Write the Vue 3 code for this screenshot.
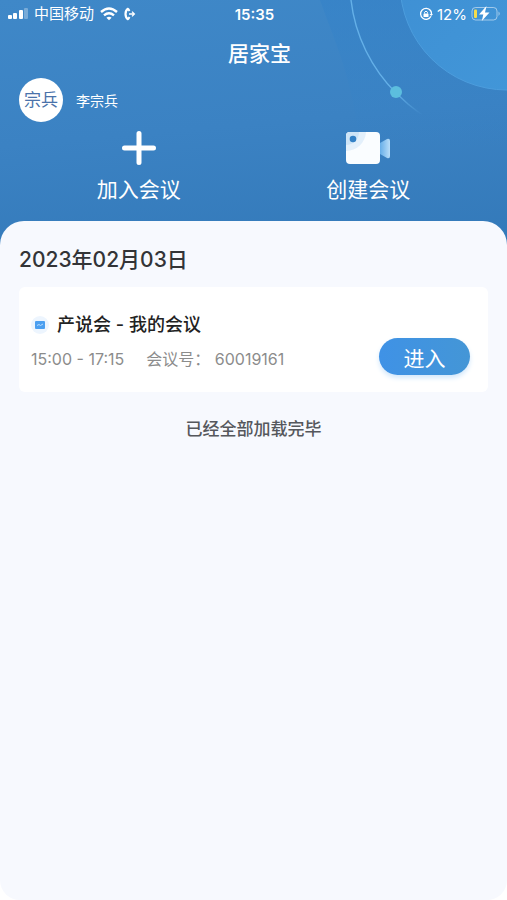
<template>
  <div class="page">
    <header class="hero">
      <svg class="decor" viewBox="0 0 187 236" aria-hidden="true">
        <defs>
          <linearGradient id="planet" x1="0" y1="0" x2="1" y2="1">
            <stop offset="0" stop-color="#3d8dd2" />
            <stop offset="1" stop-color="#4399da" />
          </linearGradient>
          <linearGradient id="orbit" x1="0" y1="0" x2="0" y2="1">
            <stop offset="0" stop-color="#64b0e8" />
            <stop offset=".8" stop-color="#64b0e8" />
            <stop offset="1" stop-color="#64b0e8" stop-opacity="0" />
          </linearGradient>
          <linearGradient id="shade" x1="0" y1="0" x2="0" y2="1">
            <stop offset="0" stop-color="#3482c8" stop-opacity=".6" />
            <stop offset="1" stop-color="#3482c8" stop-opacity="0" />
          </linearGradient>
        </defs>
        <path d="M0 0C14 40 34 80 40 150H187V0Z" fill="url(#shade)" />
        <circle cx="187" cy="-17" r="107" fill="url(#planet)" stroke="#4c9ddd" />
        <path d="M31 0C35 36 52 69 76 93Q88 105 102 115" fill="none" stroke="url(#orbit)" stroke-width="1.4" />
        <circle cx="76" cy="92" r="6" fill="#5cbede" />
      </svg>

      <div class="status">
        <div class="status-left">
          <svg width="20" height="12" viewBox="0 0 20 12" aria-hidden="true" fill="#fff">
            <rect x="0" y="7" width="4" height="4" rx="1" />
            <rect x="5" y="5" width="4" height="6" rx="1" />
            <rect x="11" y="2" width="4" height="9" rx="1" />
            <rect x="16" y="0" width="4" height="11" rx="1" opacity=".3" />
          </svg>
          <span class="carrier">中国移动</span>
          <svg width="18" height="14" viewBox="0 0 18 14" aria-hidden="true" fill="none" stroke="#fff" stroke-width="2.4">
            <path d="M1 5Q9-2 17 5M4 8.300Q9 4 14 8.300" />
            <path d="M6.400 10.700Q9 8.600 11.600 10.700L9 13.300Z" fill="#fff" stroke="none" />
          </svg>
          <svg width="12" height="14" viewBox="0 0 12 14" aria-hidden="true" fill="none" stroke="#fff">
            <path d="M4.500 1.500Q1.500 3 1.500 7T4.500 12.500" stroke-width="2.200" />
            <path d="M4 1.500L5.500 4M4 12.500L5.500 10" stroke-width="2" />
            <path d="M5 7H10M8 4.600L10.400 7L8 9.400" stroke-width="1.300" />
          </svg>
        </div>
        <span class="clock">15:35</span>
        <div class="status-right">
          <svg width="14" height="14" viewBox="0 0 14 14" aria-hidden="true" fill="none" stroke="#fff" stroke-width="1.300">
            <path d="M11.500 3.500A5.500 5.500 0 1 0 12 9.300M12.500 7A5.500 5.500 0 0 0 11.500 3.500" />
            <rect x="4.500" y="6.500" width="5" height="3.500" rx=".6" fill="#fff" stroke="none" />
            <path d="M5.500 6.500V5.300Q7 3 8.500 5.300V6.500" stroke-width="1" />
            <path d="M10.500 7H14L12.200 9Z" fill="#fff" stroke="none" />
          </svg>
          <span class="percent">12%</span>
          <svg width="30" height="16" viewBox="0 0 30 16" aria-hidden="true">
            <rect x="1" y="1.500" width="25" height="12.500" rx="3.500" fill="none" stroke="#fff" stroke-opacity=".5" />
            <path d="M27.500 5.500Q30 7.700 27.500 10Z" fill="#fff" opacity=".5" />
            <rect x="3" y="3.500" width="3" height="8.500" rx="1" fill="#f5dc4b" />
            <path d="M15.500 0L8 8.600H12.300L10.800 15L18.500 6.400H14Z" fill="#fff" />
          </svg>
        </div>
      </div>

      <h1 class="title">居家宝</h1>

      <div class="profile">
        <span class="avatar">宗兵</span>
        <span>李宗兵</span>
      </div>

      <div class="actions">
        <button type="button" class="action">
          <svg width="34" height="34" viewBox="0 0 34 34" aria-hidden="true">
            <path d="M17 2.500V31.500M2.500 17H31.500" stroke="#fff" stroke-width="5" stroke-linecap="round" />
          </svg>
          <span>加入会议</span>
        </button>
        <button type="button" class="action">
          <svg width="46" height="34" viewBox="0 0 46 34" aria-hidden="true">
            <defs>
              <linearGradient id="lens" x1="0" y1="0" x2="1" y2="0">
                <stop offset="0" stop-color="#66aee8" />
                <stop offset="1" stop-color="#b9ddf8" />
              </linearGradient>
            </defs>
            <path d="M35 12L42 8Q45 7 45 10V25Q45 28 42 27L35 23Z" fill="url(#lens)" />
            <rect x="1" y="1" width="34" height="32" rx="4" fill="#fafdff" />
            <path d="M1 20V5Q1 1 5 1H21A20 20 0 0 1 1 20Z" fill="#e3f0fb" />
            <path d="M1 14V5Q1 1 5 1H14A13 13 0 0 1 1 14Z" fill="#cde4f7" />
            <circle cx="8" cy="8" r="3.300" fill="#3381c6" />
          </svg>
          <span>创建会议</span>
        </button>
      </div>
    </header>

    <main class="sheet">
      <h2 class="date">2023年02月03日</h2>

      <article v-for="meeting in meetings" :key="meeting.number" class="card">
        <div class="info">
          <h3 class="name">
            <svg width="18" height="18" viewBox="0 0 18 18" aria-hidden="true">
              <circle cx="9" cy="9" r="9" fill="#edf5fe" />
              <rect x="4" y="5" width="10" height="8" rx="1" fill="#4b9ff0" />
              <path d="M6 9.500L8 8.500L9.500 9.500L12 8" fill="none" stroke="#b8dcff" />
            </svg>
            <span>{{ meeting.name }}</span>
          </h3>
          <p class="meta">
            <span>{{ meeting.time }}</span>
            <span>会议号： {{ meeting.number }}</span>
          </p>
        </div>
        <button type="button" class="enter">进入</button>
      </article>

      <p class="end">已经全部加载完毕</p>
    </main>
  </div>
</template>

<script setup>
import { ref } from 'vue'

const meetings = ref([
  { name: '产说会 - 我的会议', time: '15:00 - 17:15', number: '60019161' }
])
</script>

<style>
body {
  margin: 0;
  background: #fff;
}
</style>

<style scoped>
.page {
  min-height: 100vh;
  display: flex;
  flex-direction: column;
  font-family: Inter, "Noto Sans CJK SC", sans-serif;
}

h1, h2, h3, p {
  margin: 0;
}

button {
  font-family: inherit;
  border: none;
  cursor: pointer;
}

svg {
  display: block;
  flex: none;
}

.hero {
  position: relative;
  padding-bottom: 42px;
  color: #fff;
  background: linear-gradient(175deg, #3f88c8 0%, #3b82c3 50%, #3379b9 100%);
}

.decor {
  position: absolute;
  top: 0;
  right: 0;
  width: 187px;
  height: 236px;
}

.status {
  position: relative;
  display: grid;
  grid-template-columns: 1fr auto 1fr;
  align-items: center;
  height: 28px;
  padding: 0 6px 0 8px;
}

.status-left,
.status-right {
  display: flex;
  align-items: center;
  gap: 6px;
}

.status-right {
  justify-content: flex-end;
  gap: 4px;
}

.carrier {
  font-size: 15px;
  line-height: 20px;
}

.clock {
  font-size: 15px;
  font-weight: 600;
}

.percent {
  font-size: 15px;
}

.title {
  position: relative;
  padding: 2px 0 0 12px;
  font-size: 21px;
  line-height: 48px;
  font-weight: 500;
  text-align: center;
}

.profile {
  position: relative;
  display: flex;
  align-items: center;
  gap: 13px;
  padding-left: 19px;
  font-size: 14px;
}

.avatar {
  width: 44px;
  height: 44px;
  border-radius: 50%;
  background: #fff;
  color: #4a72aa;
  font-size: 17px;
  line-height: 44px;
  text-align: center;
}

.actions {
  position: relative;
  display: grid;
  grid-template-columns: 1fr 1fr;
  padding: 9px 24px 0;
}

.action {
  display: flex;
  flex-direction: column;
  align-items: center;
  gap: 9px;
  padding: 0;
  background: none;
  color: #fff;
  font-size: 21px;
  line-height: 32px;
}

.sheet {
  position: relative;
  flex: 1;
  margin-top: -27px;
  padding: 24px 19px;
  border-radius: 24px 24px 20px 20px;
  background: #f7f9fe;
}

.date {
  font-size: 21px;
  line-height: 30px;
  font-weight: 500;
  color: #333437;
}

.card {
  display: flex;
  align-items: flex-end;
  justify-content: space-between;
  margin-top: 12px;
  padding: 22px 18px 17px 12px;
  border-radius: 6px;
  background: #fff;
}

.name {
  display: flex;
  align-items: center;
  gap: 8px;
  font-size: 18px;
  line-height: 32px;
  font-weight: 500;
  color: #222;
}

.meta {
  display: flex;
  gap: 22px;
  margin-top: 6px;
  padding-bottom: 4px;
  font-size: 16px;
  line-height: 24px;
  color: #8c8c8c;
}

.enter {
  width: 91px;
  height: 37px;
  padding: 0;
  border-radius: 19px;
  background: linear-gradient(90deg, #3f92e6, #4496d6);
  box-shadow: 0 3px 5px #d3e8fb;
  color: #fff;
  font-size: 21px;
}

.end {
  margin-top: 23px;
  font-size: 17px;
  line-height: 28px;
  font-weight: 500;
  text-align: center;
  color: #55575c;
}
</style>
